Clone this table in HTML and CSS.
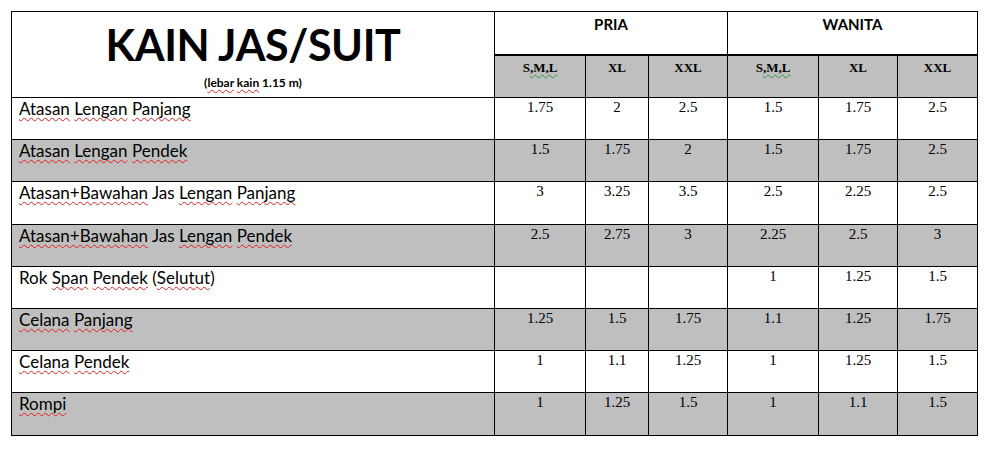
FILE: index.html
```html
<!DOCTYPE html>
<html lang="id">
<head>
<meta charset="utf-8">
<title>Kain Jas/Suit</title>
<link rel="stylesheet" href="styles.css">
</head>
<body>
<div class="page">
<table class="sheet">
  <colgroup>
    <col class="c-label">
    <col class="c-sml">
    <col class="c-xl">
    <col class="c-xxl">
    <col class="c-sml">
    <col class="c-xl2">
    <col class="c-xxl2">
  </colgroup>
  <thead>
    <tr class="group-row">
      <th class="title-cell" rowspan="2">
        <div class="title">KAIN JAS/SUIT</div>
        <div class="subtitle">(<span class="sp">lebar</span> <span class="sp">kain</span> 1.15 m)</div>
      </th>
      <th class="group" colspan="3">PRIA</th>
      <th class="group" colspan="3">WANITA</th>
    </tr>
    <tr class="size-row">
      <th class="size">S<span class="gr">,M,L</span></th>
      <th class="size">XL</th>
      <th class="size">XXL</th>
      <th class="size">S<span class="gr">,M,L</span></th>
      <th class="size">XL</th>
      <th class="size">XXL</th>
    </tr>
  </thead>
  <tbody>
    <tr>
      <td class="label"><span class="sp">Atasan</span> <span class="sp">Lengan</span> <span class="sp">Panjang</span></td>
      <td>1.75</td><td>2</td><td>2.5</td><td>1.5</td><td>1.75</td><td>2.5</td>
    </tr>
    <tr class="shade">
      <td class="label"><span class="sp">Atasan</span> <span class="sp">Lengan</span> <span class="sp">Pendek</span></td>
      <td>1.5</td><td>1.75</td><td>2</td><td>1.5</td><td>1.75</td><td>2.5</td>
    </tr>
    <tr>
      <td class="label"><span class="sp">Atasan+Bawahan</span> Jas <span class="sp">Lengan</span> <span class="sp">Panjang</span></td>
      <td>3</td><td>3.25</td><td>3.5</td><td>2.5</td><td>2.25</td><td>2.5</td>
    </tr>
    <tr class="shade">
      <td class="label"><span class="sp">Atasan+Bawahan</span> Jas <span class="sp">Lengan</span> <span class="sp">Pendek</span></td>
      <td>2.5</td><td>2.75</td><td>3</td><td>2.25</td><td>2.5</td><td>3</td>
    </tr>
    <tr>
      <td class="label">Rok <span class="sp">Span</span> <span class="sp">Pendek</span> (<span class="sp">Selutut</span>)</td>
      <td></td><td></td><td></td><td>1</td><td>1.25</td><td>1.5</td>
    </tr>
    <tr class="shade">
      <td class="label"><span class="sp">Celana</span> <span class="sp">Panjang</span></td>
      <td>1.25</td><td>1.5</td><td>1.75</td><td>1.1</td><td>1.25</td><td>1.75</td>
    </tr>
    <tr>
      <td class="label"><span class="sp">Celana</span> <span class="sp">Pendek</span></td>
      <td>1</td><td>1.1</td><td>1.25</td><td>1</td><td>1.25</td><td>1.5</td>
    </tr>
    <tr class="shade">
      <td class="label"><span class="sp">Rompi</span></td>
      <td>1</td><td>1.25</td><td>1.5</td><td>1</td><td>1.1</td><td>1.5</td>
    </tr>
  </tbody>
</table>
</div>
</body>
</html>
```

FILE: styles.css
```css
html, body {
  margin: 0;
  padding: 0;
  background: #fff;
}

.page {
  padding: 11px 0 0 11px;
}

.sheet {
  border-collapse: collapse;
  table-layout: fixed;
  width: 966px;
  color: #000;
}

.c-label { width: 483px; }
.c-sml { width: 91px; }
.c-xl { width: 63px; }
.c-xxl { width: 79px; }
.c-xl2 { width: 79px; }
.c-xxl2 { width: 80px; }

.sheet th,
.sheet td {
  border: 1px solid #000;
  padding: 1px 0 0 0;
  vertical-align: top;
  text-align: center;
  font-family: "Liberation Serif", "Times New Roman", serif;
  font-size: 15px;
  font-weight: normal;
  line-height: 17px;
}

.group-row th {
  height: 39px;
}

.size-row th {
  height: 37px;
  background: #bfbfbf;
  border-top: 2px solid #000;
}

.title-cell {
  background: #fff;
}

.sheet .title-cell {
  padding-top: 8px;
}

.title {
  font-family: Lato, "Open Sans", sans-serif;
  font-weight: 700;
  font-size: 43px;
  line-height: 50px;
  letter-spacing: -0.4px;
}

.subtitle {
  font-family: Lato, "Open Sans", sans-serif;
  font-weight: 700;
  font-size: 12px;
  line-height: 16px;
  margin-top: 5px;
}

.sheet .group {
  font-family: Lato, "Open Sans", sans-serif;
  font-weight: 700;
  font-size: 15px;
  line-height: 18px;
  padding-top: 3px;
}

.sheet .size {
  font-family: "Liberation Serif", "Times New Roman", serif;
  font-weight: 700;
  font-size: 13px;
  line-height: 15px;
  padding-top: 4px;
}

.sheet td {
  height: 40.2px;
}

.sheet td.label {
  text-align: left;
  padding-left: 7px;
  font-family: Lato, "Open Sans", sans-serif;
  font-size: 17px;
  line-height: 19px;
}

.shade td {
  background: #bfbfbf;
}

.sp {
  text-decoration: underline wavy #e02020;
  text-decoration-thickness: 1px;
  text-underline-offset: 2px;
  text-decoration-skip-ink: none;
}

.gr {
  text-decoration: underline wavy #2a9a3a;
  text-decoration-thickness: 1px;
  text-underline-offset: 2px;
  text-decoration-skip-ink: none;
}
```
